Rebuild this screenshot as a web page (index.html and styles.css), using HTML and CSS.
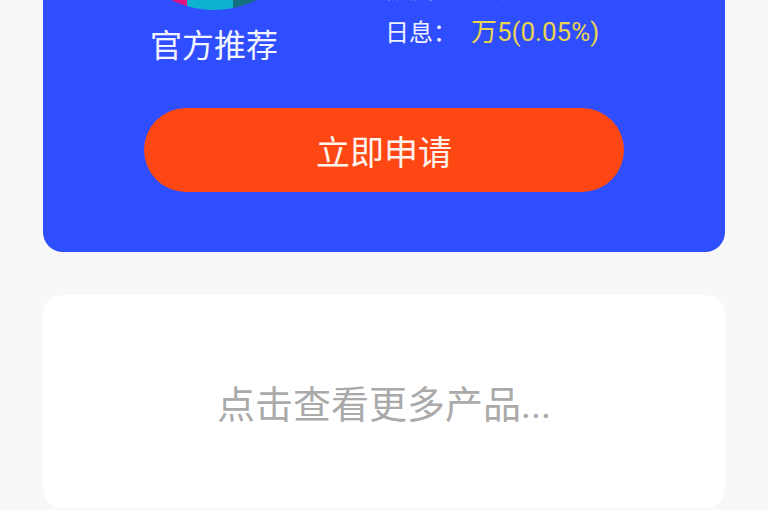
FILE: index.html
```html
<!DOCTYPE html>
<html lang="zh-CN">
<head>
<meta charset="utf-8">
<title>官方推荐</title>
<link rel="stylesheet" href="styles.css">
</head>
<body>
<main class="page">
  <section class="product">
    <div class="summary">
      <div class="brand">
        <div class="logo"></div>
        <div class="brand-name">官方推荐</div>
      </div>
      <div class="facts">
        <div class="fact"><span class="fact-label">额度：</span><span class="fact-value">20万</span></div>
        <div class="fact"><span class="fact-label">日息：</span><span class="fact-value">万5(0.05%)</span></div>
      </div>
    </div>
    <button class="apply" type="button">立即申请</button>
  </section>
  <section class="more">点击查看更多产品...</section>
</main>
</body>
</html>
```
FILE: styles.css
```css
html, body {
  margin: 0;
  height: 510px;
  overflow: hidden;
  background: #f8f8f8;
}
body {
  font-family: Roboto, "Noto Sans CJK SC", sans-serif;
}
.page {
  display: flex;
  flex-direction: column;
  gap: 43px;
  padding: 0 43px;
  margin-top: -180px;
}
.product {
  display: flex;
  flex-direction: column;
  align-items: center;
  height: 432px;
  background: #2f4eff;
  border-radius: 0 0 20px 20px;
}
.summary {
  display: flex;
  align-self: stretch;
  gap: 76px;
  padding: 0 76px;
  height: 288px;
}
.brand {
  display: flex;
  flex-direction: column;
  align-items: center;
  width: 190px;
  gap: 14px;
}
.logo {
  width: 190px;
  height: 190px;
  border-radius: 50%;
  background: linear-gradient(90deg, #e3127c 0 68px, #0db4cf 68px 114px, #14707f 114px);
}
.brand-name {
  font-size: 32px;
  line-height: 44px;
  color: #f2f4ff;
}
.facts {
  display: flex;
  flex-direction: column;
  justify-content: flex-end;
  gap: 2px;
  height: 233px;
}
.fact {
  display: flex;
  align-items: baseline;
  gap: 14px;
  font-size: 24px;
  line-height: 40px;
}
.fact-label {
  color: #eef1ff;
}
.fact-value {
  color: #e8d44f;
  font-size: 26px;
}
.apply {
  width: 480px;
  height: 84px;
  border: 0;
  border-radius: 42px;
  background: #ff4713;
  color: #fff3ee;
  font-family: inherit;
  font-size: 34px;
  padding: 0;
}
.more {
  display: flex;
  align-items: center;
  justify-content: center;
  height: 213px;
  background: #fff;
  border-radius: 20px;
  color: #aaaaaa;
  font-size: 38px;
}
```
